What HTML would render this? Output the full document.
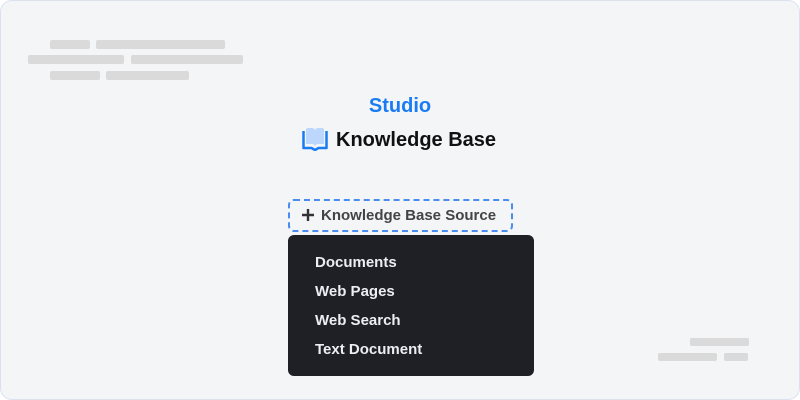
<!DOCTYPE html>
<html><head><style>
*{margin:0;padding:0;box-sizing:border-box}
body{width:800px;height:400px;background:#fff;font-family:"Liberation Sans",sans-serif;position:relative;overflow:hidden}
.frame{position:absolute;left:0;top:0;width:800px;height:400px;border:1.5px solid #dbe2ee;border-radius:12px;background:#f4f5f7}
.b{position:absolute;background:#dadada;border-radius:2px;height:9px}
.t{position:absolute;white-space:nowrap;font-weight:bold}
.dd{position:absolute;left:288px;top:235px;width:246px;height:141px;background:#1e2025;border-radius:6px}
.dd div{position:absolute;left:27px;color:#eceef2;font-size:15px;font-weight:bold}
</style></head><body>
<div class="frame"></div>
<div class="b" style="left:50px;top:40px;width:40px"></div>
<div class="b" style="left:96px;top:40px;width:129px"></div>
<div class="b" style="left:28px;top:55px;width:96px"></div>
<div class="b" style="left:131px;top:55px;width:112px"></div>
<div class="b" style="left:50px;top:71px;width:50px"></div>
<div class="b" style="left:106px;top:71px;width:83px"></div>
<div class="b" style="left:690px;top:338px;width:59px;height:8px"></div>
<div class="b" style="left:658px;top:353px;width:59px;height:8px"></div>
<div class="b" style="left:724px;top:353px;width:24px;height:8px"></div>
<div class="t" style="left:0;width:800px;text-align:center;top:95px;font-size:20px;color:#1a7cf5">Studio</div>
<svg style="position:absolute;left:302px;top:127px" width="26" height="24" viewBox="0 0 26 24">
<path d="M4 3q0-2 2-2h4q3 0 3 3v15q-1-2-3-2H4z" fill="#bcd7fb"/>
<path d="M22 3q0-2-2-2h-4q-3 0-3 3v15q1-2 3-2h6z" fill="#bcd7fb"/>
<path d="M1.5 4v17h8l3.5 2 3.5-2h8V4" fill="none" stroke="#1a7cf5" stroke-width="2.5" stroke-linejoin="round"/>
</svg>
<div class="t" style="left:336px;top:129px;font-size:20px;color:#111">Knowledge Base</div>
<div style="position:absolute;left:288px;top:199px;width:225px;height:33px;border:2px dashed #4a8cf0;border-radius:6px"></div>
<svg style="position:absolute;left:302px;top:209px" width="12" height="12" viewBox="0 0 12 12"><path d="M6 0v12M0 6h12" stroke="#333" stroke-width="2.4"/></svg>
<div class="t" style="left:321px;top:207px;font-size:15px;color:#444">Knowledge Base Source</div>
<div class="dd">
<div style="top:19px">Documents</div>
<div style="top:48px">Web Pages</div>
<div style="top:77px">Web Search</div>
<div style="top:106px">Text Document</div>
</div>
</body></html>
